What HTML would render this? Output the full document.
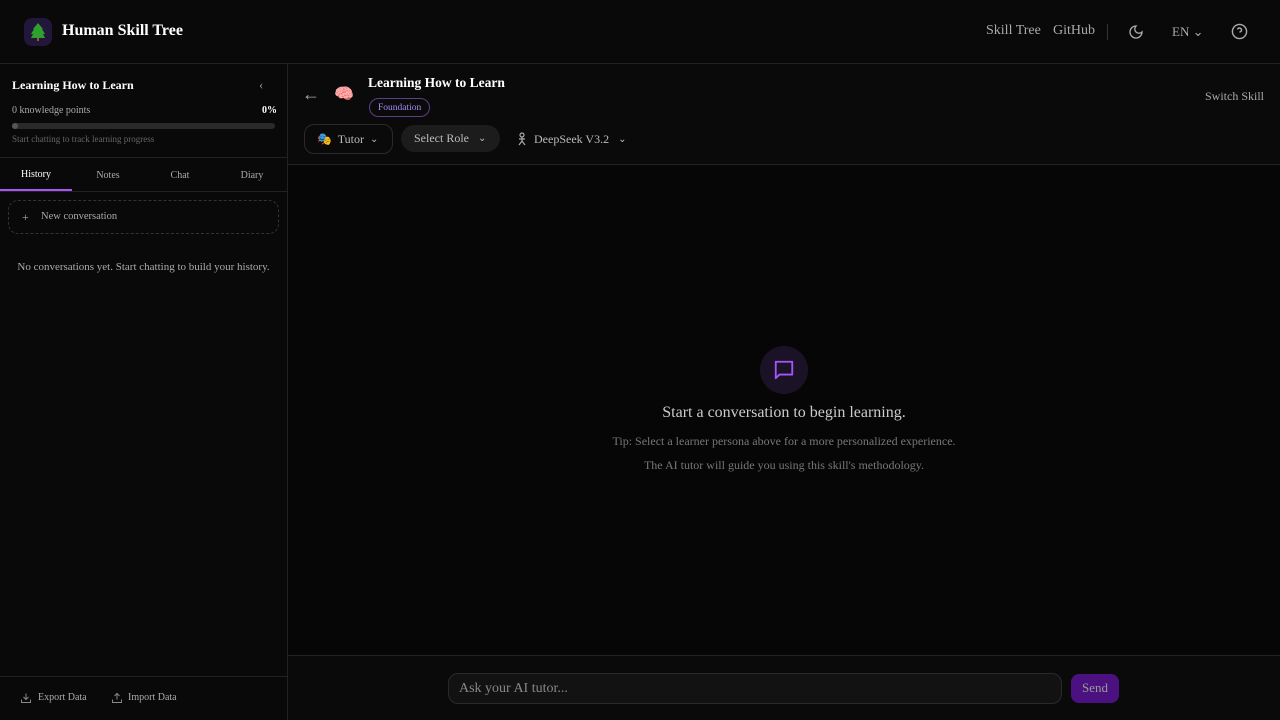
<!DOCTYPE html>
<html><head><meta charset="utf-8"><style>
*{box-sizing:border-box;margin:0;padding:0}
body{width:1280px;height:720px;background:#060606;font-family:"Liberation Serif",serif;color:#ddd;position:relative;overflow:hidden}
.a{position:absolute}
.hdr{left:0;top:0;width:1280px;height:64px;background:#090909;border-bottom:1px solid #222}
.side{left:0;top:64px;width:288px;height:656px;background:#090909;border-right:1px solid #222}
.mh{left:288px;top:64px;width:992px;height:101px;background:#0a0a0a;border-bottom:1px solid #222}
.ft{left:288px;top:655px;width:992px;height:65px;background:#0a0a0a;border-top:1px solid #222}
.pill{position:absolute;height:30px;border-radius:10px;font-size:12px;color:#bbb;display:flex;align-items:center}
</style></head><body>
<div class="a hdr">
 <div class="a" style="left:24px;top:18px;width:28px;height:28px;border-radius:8px;background:#22163a"></div>
 <svg class="a" style="left:30px;top:22px" width="16" height="20" viewBox="0 0 16 20"><path d="M8 1 L13 7 L12 7 L15 12 L13 12 L15 16 L1 16 L3 12 L1 12 L4 7 L3 7Z" fill="#2ea02e"/><rect x="7" y="16" width="2" height="3" fill="#a0522d"/></svg>
 <div class="a" style="left:62px;top:22px;font-size:16px;font-weight:bold;color:#fff">Human Skill Tree</div>
 <div class="a" style="left:986px;top:23px;font-size:14px;color:#aaa">Skill Tree</div>
 <div class="a" style="left:1053px;top:23px;font-size:14px;color:#aaa">GitHub</div>
 <div class="a" style="left:1107px;top:24px;width:1px;height:16px;background:#333"></div>
 <svg class="a" style="left:1128px;top:24px" width="16" height="16" viewBox="0 0 24 24" fill="none" stroke="#aaa" stroke-width="2"><path d="M12 3a6 6 0 0 0 9 9 9 9 0 1 1-9-9Z"/></svg>
 <div class="a" style="left:1172px;top:24px;font-size:13px;color:#aaa">EN ⌄</div>
 <svg class="a" style="left:1231px;top:23px" width="17" height="17" viewBox="0 0 24 24" fill="none" stroke="#aaa" stroke-width="2"><circle cx="12" cy="12" r="10"/><path d="M9.1 9a3 3 0 0 1 5.8 1c0 2-3 3-3 3M12 17h.01"/></svg>
</div>
<div class="a side">
 <div class="a" style="left:12px;top:14px;font-size:12px;font-weight:bold;color:#fff">Learning How to Learn</div>
 <div class="a" style="left:259px;top:13px;font-size:13px;color:#999">‹</div>
 <div class="a" style="left:12px;top:41px;font-size:10px;color:#aaa">0 knowledge points</div>
 <div class="a" style="left:262px;top:41px;font-size:10px;color:#fff;font-weight:bold">0%</div>
 <div class="a" style="left:12px;top:59px;width:263px;height:6px;border-radius:3px;background:#2a2a2a"></div>
 <div class="a" style="left:12px;top:59px;width:6px;height:6px;border-radius:3px;background:#555"></div>
 <div class="a" style="left:12px;top:70px;font-size:9px;color:#666">Start chatting to track learning progress</div>
 <div class="a" style="left:0;top:93px;width:287px;height:1px;background:#222"></div>
 <div class="a" style="left:0;top:105px;width:72px;text-align:center;font-size:10px;color:#fff">History</div>
 <div class="a" style="left:72px;top:106px;width:72px;text-align:center;font-size:10px;color:#aaa">Notes</div>
 <div class="a" style="left:144px;top:106px;width:72px;text-align:center;font-size:10px;color:#aaa">Chat</div>
 <div class="a" style="left:216px;top:106px;width:72px;text-align:center;font-size:10px;color:#aaa">Diary</div>
 <div class="a" style="left:0;top:125px;width:72px;height:2px;background:#a855f7"></div>
 <div class="a" style="left:0;top:127px;width:287px;height:1px;background:#222"></div>
 <div class="a" style="left:8px;top:136px;width:271px;height:34px;border:1px dashed #333;border-radius:10px"></div>
 <div class="a" style="left:22px;top:146px;font-size:12px;color:#aaa">+</div>
 <div class="a" style="left:41px;top:147px;font-size:10.5px;color:#aaa">New conversation</div>
 <div class="a" style="left:0;top:197px;width:287px;text-align:center;font-size:11px;color:#aaa">No conversations yet. Start chatting to build your history.</div>
 <div class="a" style="left:0;top:612px;width:287px;height:1px;background:#222"></div>
 <svg class="a" style="left:20px;top:628px" width="12" height="12" viewBox="0 0 24 24" fill="none" stroke="#888" stroke-width="2"><path d="M12 3v12M7 10l5 5 5-5M3 15v6h18v-6"/></svg>
 <div class="a" style="left:38px;top:628px;font-size:10px;color:#aaa">Export Data</div>
 <svg class="a" style="left:111px;top:628px" width="12" height="12" viewBox="0 0 24 24" fill="none" stroke="#888" stroke-width="2"><path d="M12 15V3M7 8l5-5 5 5M3 15v6h18v-6"/></svg>
 <div class="a" style="left:128px;top:628px;font-size:10px;color:#aaa">Import Data</div>
</div>
<div class="a mh">
 <div class="a" style="left:14px;top:20px;font-size:18px;color:#aaa">←</div>
 <div class="a" style="left:46px;top:20px;font-size:16px">🧠</div>
 <div class="a" style="left:80px;top:11px;font-size:13.5px;font-weight:bold;color:#fff">Learning How to Learn</div>
 <div class="a" style="left:81px;top:34px;height:19px;padding:0 8px;border:1px solid #5b3f8a;border-radius:10px;font-size:9.5px;color:#a78bfa;line-height:19px">Foundation</div>
 <div class="a" style="left:917px;top:25px;font-size:12px;color:#aaa">Switch Skill</div>
 <div class="pill" style="left:16px;top:60px;width:89px;border:1px solid #2a2a2a;padding-left:12px">🎭&nbsp; Tutor&nbsp;&nbsp; <span style="font-size:10px">⌄</span></div>
 <div class="pill" style="left:113px;top:61px;width:99px;height:27px;background:#1c1c1c;border-radius:14px;padding-left:13px">Select Role&nbsp;&nbsp;&nbsp; <span style="font-size:10px">⌄</span></div>
 <div class="pill" style="left:228px;top:60px;padding-left:0"><svg width="12" height="14" viewBox="0 0 12 14" fill="none" stroke="#aaa" stroke-width="1.2"><circle cx="6" cy="3" r="2"/><path d="M6 5v4M3 7h6M6 9l-3 4M6 9l3 4"/></svg>&nbsp;&nbsp;DeepSeek V3.2&nbsp;&nbsp;&nbsp;<span style="font-size:10px">⌄</span></div>
</div>
<div class="a" style="left:760px;top:346px;width:48px;height:48px;border-radius:50%;background:#1c1228"></div>
<svg class="a" style="left:773px;top:359px" width="22" height="22" viewBox="0 0 24 24" fill="none" stroke="#a855f7" stroke-width="2" stroke-linejoin="round"><path d="M3 3h18v14H7l-4 4Z"/></svg>
<div class="a" style="left:288px;top:404px;width:992px;text-align:center;font-size:16px;color:#ccc">Start a conversation to begin learning.</div>
<div class="a" style="left:288px;top:434px;width:992px;text-align:center;font-size:12px;color:#777">Tip: Select a learner persona above for a more personalized experience.</div>
<div class="a" style="left:288px;top:458px;width:992px;text-align:center;font-size:12px;color:#777">The AI tutor will guide you using this skill's methodology.</div>
<div class="a ft">
 <div class="a" style="left:160px;top:17px;width:614px;height:31px;border:1px solid #2a2a2a;border-radius:10px;background:#121212;padding-left:10px;line-height:29px;font-size:14px;color:#888">Ask your AI tutor...</div>
 <div class="a" style="left:783px;top:18px;width:48px;height:29px;border-radius:8px;background:#4c1180;text-align:center;line-height:28px;font-size:13px;color:#999">Send</div>
</div>
</body></html>
